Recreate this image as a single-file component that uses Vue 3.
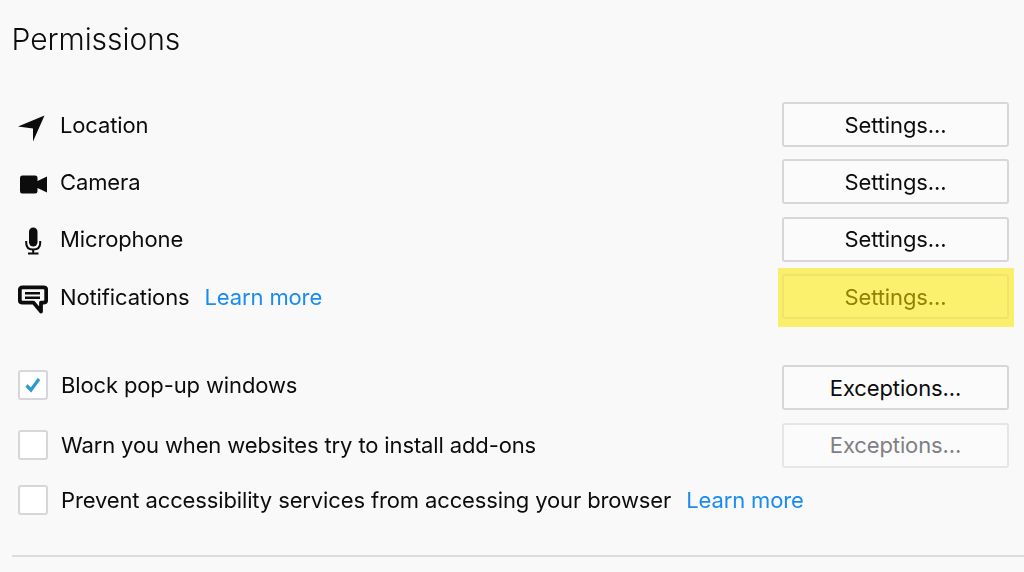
<template>
  <div class="page">
    <h1 class="title">Permissions</h1>

    <div class="perm-list">
      <div class="row" v-for="item in permissions" :key="item.label">
        <span class="icon">
          <svg v-if="item.icon === 'location'" width="30" height="36" viewBox="0 0 30 36">
            <path d="M26.5 8.5 L0 19.5 L15 21.5 L15 34.5 Z" fill="#0c0c0d" />
          </svg>
          <svg v-else-if="item.icon === 'camera'" width="30" height="36" viewBox="0 0 30 36">
            <path d="M4 11.5 H17 Q19.5 11.5 19.5 14 V17 L29 12.5 V28.5 L19.5 24 V27 Q19.5 29.5 17 29.5 H4 Q2 29.5 2 27 V14 Q2 11.5 4 11.5 Z" fill="#0c0c0d" />
          </svg>
          <svg v-else-if="item.icon === 'mic'" width="30" height="36" viewBox="0 0 30 36">
            <rect x="11" y="6.5" width="8.5" height="19" rx="4.2" fill="#0c0c0d" />
            <path d="M8.2 20 V22 Q8.2 28.5 15.2 28.5 Q22.2 28.5 22.2 22 V20" fill="none" stroke="#0c0c0d" stroke-width="2" />
            <path d="M15.2 28.5 V32 M10 32.5 H20.5" fill="none" stroke="#0c0c0d" stroke-width="2" />
          </svg>
          <svg v-else width="30" height="36" viewBox="0 0 30 36">
            <path d="M4.5 8.4 H25.5 Q28.2 8.4 28.2 11 V21 Q28.2 23.6 25.5 23.6 H23 L23 32.5 L15.5 23.6 H4.5 Q1.8 23.6 1.8 21 V11 Q1.8 8.4 4.5 8.4 Z" fill="none" stroke="#0c0c0d" stroke-width="3.8" stroke-linejoin="round" />
            <path d="M7 14.2 H22 M7 18.8 H22" stroke="#0c0c0d" stroke-width="2.4" />
          </svg>
        </span>
        <span class="label">{{ item.label }}</span>
        <a v-if="item.link" class="link">Learn more</a>
        <span class="btn-wrap">
          <button class="btn" :class="{ marked: item.highlight }">Settings...</button>
          <span v-if="item.highlight" class="marker"></span>
        </span>
      </div>
    </div>

    <div class="check-list">
      <div class="row" :class="{ raised: item.checked }" v-for="item in checks" :key="item.label">
        <span class="checkbox">
          <svg v-if="item.checked" width="18" height="16" viewBox="0 0 18 16">
            <path d="M2.5 8.5 L7 13 L15 2" fill="none" stroke="#2a9ad6" stroke-width="3.2" />
          </svg>
        </span>
        <span class="check-label">{{ item.label }}</span>
        <a v-if="item.link" class="link">Learn more</a>
        <span v-if="item.button" class="btn-wrap">
          <button class="btn" :class="{ disabled: item.disabled }">Exceptions...</button>
        </span>
      </div>
    </div>

    <div class="divider"></div>
  </div>
</template>

<script setup>
const permissions = [
  { icon: "location", label: "Location" },
  { icon: "camera", label: "Camera" },
  { icon: "mic", label: "Microphone" },
  { icon: "notif", label: "Notifications", link: true, highlight: true },
];

const checks = [
  { label: "Block pop-up windows", checked: true, button: true },
  { label: "Warn you when websites try to install add-ons", button: true, disabled: true },
  { label: "Prevent accessibility services from accessing your browser", link: true },
];
</script>

<style>
html,
body {
  background: #f9f9fa;
}
</style>

<style scoped>
.page {
  width: 1024px;
  height: 572px;
  box-sizing: border-box;
  padding: 19px 15px 0 12px;
  background: #f9f9fa;
  color: #0c0c0d;
  font-family: Inter, "Liberation Sans", sans-serif;
  font-size: 22px;
  letter-spacing: -0.13px;
  overflow: hidden;
}

.title {
  margin: 0 0 42px -0.5px;
  font-size: 30px;
  line-height: 41px;
  font-weight: 300;
  letter-spacing: -0.05px;
}

.row {
  display: flex;
  align-items: center;
  height: 45px;
  margin-bottom: 12.4px;
}

.icon {
  width: 30px;
  height: 36px;
  margin: 0 12px 0 6px;
  flex: none;
}

.icon svg {
  display: block;
}

.link {
  margin-left: 15px;
  color: #1a8cf0;
}

.btn-wrap {
  position: relative;
  margin-left: auto;
  display: block;
}

.btn {
  display: block;
  width: 227px;
  height: 45px;
  padding: 0;
  background: #fbfbfb;
  border: 2px solid #d7d7db;
  border-radius: 3px;
  color: #0c0c0d;
  font: inherit;
  letter-spacing: inherit;
}

.btn.disabled {
  color: #808084;
  border-color: #e6e6e8;
}

.btn.marked {
  color: #8f8800;
  border-color: #f0f0e8;
}

.marker {
  position: absolute;
  left: -4px;
  right: -5px;
  top: -6px;
  bottom: -8px;
  background: #fff56f;
  mix-blend-mode: multiply;
}

.check-list {
  margin-top: 46px;
}

.check-list .row {
  margin-bottom: 12.6px;
}

.check-list .row:last-child {
  height: 46px;
  margin-top: -3px;
}

.raised .checkbox,
.raised .check-label {
  margin-bottom: 6px;
}

.checkbox {
  width: 30px;
  height: 30px;
  margin: 0 13px 0 6px;
  box-sizing: border-box;
  flex: none;
  display: flex;
  align-items: center;
  justify-content: center;
  background: #fff;
  border: 2px solid #d7d7db;
  border-radius: 3px;
}

.divider {
  height: 2px;
  margin-right: -15px;
  margin-top: 32px;
  background: #dcdcde;
}
</style>
